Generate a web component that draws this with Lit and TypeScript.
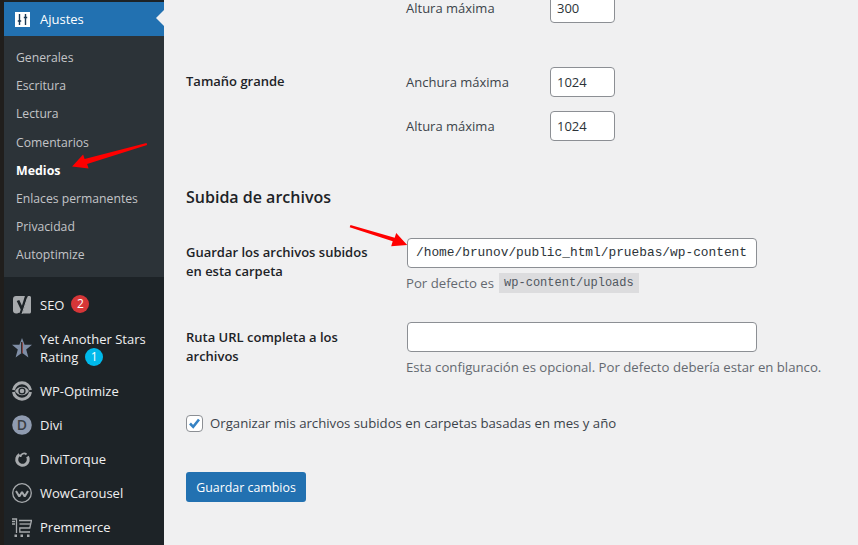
import { LitElement, html, css, svg } from "lit";
import { customElement } from "lit/decorators.js";

const icons: Record<string, unknown> = {
  seo: svg`<svg class="ic" viewBox="0 0 20 20"><path fill="#a7aaad" d="M4 1h13.500c.8 0 1.500.7 1.500 1.500V17c0 .8-.7 1.500-1.500 1.500H4C2.300 18.500 1 17.200 1 15.500V4C1 2.300 2.300 1 4 1z"/><path fill="none" stroke="#1d2327" stroke-width="2.800" d="M6 5.500l4 8.500"/><path fill="none" stroke="#1d2327" stroke-width="2.800" d="M15 -1l-6 19.500-3 1"/><path fill="none" stroke="#a7aaad" stroke-width="1" d="M15.500 2.500l-5.500 16.500"/></svg>`,
  star: svg`<svg class="ic" viewBox="0 0 20 20"><path fill="#7f8ea6" d="M10 0l2.600 6.800H20l-5.800 4.700 2.200 7.900L10 14.800 3.600 19.400l2.200-7.900L0 6.800h7.400z"/><path fill="#33302f" d="M9 4h1.200v11.500L9 16z"/><path fill="#8f3a36" d="M10.200 4l.8 1v10.500l-.8-.5z"/></svg>`,
  opt: svg`<svg class="ic" viewBox="0 0 20 20"><g fill="none" stroke="#a7aaad"><path stroke-width="3" d="M1.500 9a8.600 8.600 0 0 1 17 0"/><path stroke-width="3" d="M18.500 11a8.600 8.600 0 0 1-17 0"/></g><path fill="#a7aaad" d="M3 10c2-3 4.300-4.300 7-4.300s5 1.300 7 4.300c-2 3-4.300 4.300-7 4.300S5 13 3 10z"/><circle cx="10" cy="10" r="3.600" fill="#1d2327"/><circle cx="10" cy="10" r="2.300" fill="#a7aaad"/></svg>`,
  divi: svg`<svg class="ic" viewBox="0 0 20 20"><circle cx="10" cy="10" r="9.800" fill="#8f9bb0"/><text x="10" y="14.800" text-anchor="middle" font-family="Open Sans" font-weight="600" font-size="14" fill="#3a3f44">D</text></svg>`,
  torque: svg`<svg class="ic" viewBox="0 0 20 20"><path fill="none" stroke="#a7aaad" stroke-width="3" d="M7.500 5.500a5.800 5.800 0 1 0 8 2"/><path fill="none" stroke="#a7aaad" stroke-width="1.800" d="M8.500 8a3.500 3.500 0 0 1 6-2.500"/></svg>`,
  wow: svg`<svg class="ic" viewBox="0 0 20 20"><circle cx="10" cy="10" r="9.300" fill="none" stroke="#a7aaad" stroke-width="1.300"/><path fill="none" stroke="#a7aaad" stroke-width="2" stroke-linejoin="bevel" d="M4 8l3.300 5.500L10 9l2.700 4.500L16 8"/></svg>`,
  cart: svg`<svg class="ic" viewBox="0 0 20 20"><g fill="none" stroke="#a7aaad" stroke-width="1.300"><path d="M0 2h4.500v14M0 4.500h3M0 7h3"/><path d="M7 3.500h12.500l-1.700 7.500H7.800v4H18"/><path d="M7.500 7h11"/></g><path fill="#a7aaad" d="M2.500 17.500H5V20H2.500zM8.500 17.500H11V20H8.500zM15 17.500h2.500V20H15z"/></svg>`,
};

const subItems = ["Generales", "Escritura", "Lectura", "Comentarios", "Medios", "Enlaces permanentes", "Privacidad", "Autoptimize"];

@customElement("app-root")
export class AppRoot extends LitElement {
  static styles = css`
    :host {
      display: flex;
      position: relative;
      width: 858px;
      height: 545px;
      overflow: hidden;
      background: #f0f0f1;
      font-family: "Open Sans", sans-serif;
      font-size: 13px;
      line-height: 20px;
      color: #3c434a;
    }
    .side {
      flex: 0 0 160px;
      height: 545px;
      background: #1d2327;
      border-left: 4px solid #201e1c;
      padding-top: 2px;
      box-sizing: content-box;
      overflow: hidden;
    }
    .active {
      position: relative;
      height: 34px;
      background: #2271b1;
      color: #fff;
      display: flex;
      align-items: center;
      padding-left: 11px;
      gap: 10px;
    }
    .active::after {
      content: "";
      position: absolute;
      right: 0;
      top: 8px;
      border: 8px solid transparent;
      border-right-color: #f0f0f1;
    }
    .gear { width: 15px; height: 15px; flex: none; }
    .sub {
      background: #2c3338;
      padding: 8px 0 7.400px 12px;
      color: #c3c4c7;
      font-size: 12.200px;
    }
    .sub div { height: 28.200px; line-height: 28.200px; }
    .sub .cur { color: #fff; font-weight: 700; font-size: 12.400px; }
    .menu { padding-top: 11px; color: #f0f0f1; }
    .item {
      display: flex;
      align-items: center;
      min-height: 34.100px;
      gap: 8px;
      padding-left: 8px;
    }
    .ic { width: 20px; height: 20px; flex: none; overflow: hidden; }
    .item.two { height: 52px; }
    .lines { line-height: 18px; }
    .line { display: flex; }
    .badge {
      display: inline-block;
      width: 18px;
      height: 18px;
      line-height: 18px;
      margin-left: 7px;
      border-radius: 50%;
      color: #fff;
      font-size: 12px;
      text-align: center;
    }
    .red { background: #d63638; }
    .blue { background: #00b9eb; }
    main {
      flex: 1;
      padding-left: 22px;
      margin-top: -7px;
    }
    .row { display: grid; grid-template-columns: 220px 1fr; }
    .th { font-weight: 600; color: #1d2327; padding-top: 5px; line-height: 19px; width: 190px; }
    .url .th { padding-top: 6px; }
    .dim { display: flex; align-items: center; margin-bottom: 14px; }
    .dim label { width: 144px; }
    .box {
      box-sizing: border-box;
      background: #fff;
      border: 1px solid #8c8f94;
      border-radius: 4px;
      height: 30px;
      line-height: 28px;
      color: #2c3338;
    }
    .num { width: 65px; padding-left: 6px; }
    .wide {
      width: 350px;
      margin-left: 1px;
      padding-left: 8px;
      font-family: "Liberation Mono", monospace;
      font-size: 12.830px;
      white-space: nowrap;
      overflow: hidden;
    }
    .large { margin-top: 30px; }
    h2 {
      margin: 30px 0 29px;
      font-size: 16px;
      font-weight: 600;
      line-height: 24px;
      color: #1d2327;
    }
    .help { color: #646970; margin-top: 5px; height: 20px; display: flex; align-items: center; font-size: 13.200px; }
    code {
      background: #dcdcde;
      font-family: "Liberation Mono", monospace;
      font-size: 12px;
      line-height: 20px;
      padding: 0 5px;
      margin-left: 5px;
      color: #50575e;
    }
    .url { margin-top: 29px; }
    .check { display: flex; align-items: center; gap: 7px; margin-top: 36px; font-size: 13.200px; }
    .cb {
      box-sizing: border-box;
      width: 17px;
      height: 17px;
      background: #fff;
      border: 1px solid #8c8f94;
      border-radius: 4px;
      display: flex;
    }
    .cb svg { width: 15px; height: 15px; }
    .btn {
      display: inline-block;
      margin-top: 39px;
      width: 120px;
      height: 30px;
      line-height: 31px;
      text-align: center;
      border-radius: 3px;
      background: #2271b1;
      color: #fff;
      font-size: 12.400px;
    }
    .arrows {
      position: absolute;
      left: 0;
      top: 0;
      width: 858px;
      height: 545px;
      pointer-events: none;
    }
  `;

  private dim(label: string, value: string) {
    return html`<div class="dim"><label>${label}</label><div class="box num">${value}</div></div>`;
  }

  render() {
    return html`
      <nav class="side">
        <div class="active">
          <svg class="gear" viewBox="0 0 15 15">
            <rect width="15" height="15" fill="#fff" />
            <g stroke="#1d3a55" stroke-width="1.400" fill="none">
              <path d="M4.500 2v11M10.500 2v11M2.800 9h3.400M8.800 5.500h3.400" />
            </g>
          </svg>
          <span>Ajustes</span>
        </div>
        <div class="sub">
          ${subItems.map((s) => html`<div class=${s === "Medios" ? "cur" : ""}>${s}</div>`)}
        </div>
        <div class="menu">
          <div class="item">${icons.seo}<div class="line"><span>SEO</span><span class="badge red">2</span></div></div>
          <div class="item two">${icons.star}
            <div class="lines">
              <div>Yet Another Stars</div>
              <div class="line"><span>Rating</span><span class="badge blue">1</span></div>
            </div>
          </div>
          <div class="item">${icons.opt}<span>WP-Optimize</span></div>
          <div class="item">${icons.divi}<span>Divi</span></div>
          <div class="item">${icons.torque}<span>DiviTorque</span></div>
          <div class="item">${icons.wow}<span>WowCarousel</span></div>
          <div class="item">${icons.cart}<span>Premmerce</span></div>
        </div>
      </nav>
      <main>
        <div class="row"><div></div><div>${this.dim("Altura máxima", "300")}</div></div>
        <div class="row large">
          <div class="th">Tamaño grande</div>
          <div>${this.dim("Anchura máxima", "1024")}${this.dim("Altura máxima", "1024")}</div>
        </div>
        <h2>Subida de archivos</h2>
        <div class="row">
          <div class="th">Guardar los archivos subidos en esta carpeta</div>
          <div>
            <div class="box wide">/home/brunov/public_html/pruebas/wp-content</div>
            <div class="help">Por defecto es <code>wp-content/uploads</code></div>
          </div>
        </div>
        <div class="row url">
          <div class="th">Ruta URL completa a los archivos</div>
          <div>
            <div class="box wide"></div>
            <div class="help">Esta configuración es opcional. Por defecto debería estar en blanco.</div>
          </div>
        </div>
        <div class="check">
          <span class="cb"><svg viewBox="0 0 15 15"><path fill="none" stroke="#3582c4" stroke-width="2.600" d="M3 7.500l3.200 3.300L12 3.500" /></svg></span>
          <span>Organizar mis archivos subidos en carpetas basadas en mes y año</span>
        </div>
        <div class="btn">Guardar cambios</div>
      </main>
      <svg class="arrows" viewBox="0 0 858 545">
        <path fill="#f00" d="M146.500 143l.600 2-60 19 1.500 4.500-16.500-2 11-12 1.500 4.500z" />
        <path fill="#f00" d="M350.500 225l-.800 2.200 43 14-1.500 5 16-1.200-11-12-1.500 4.800z" />
      </svg>
    `;
  }
}
